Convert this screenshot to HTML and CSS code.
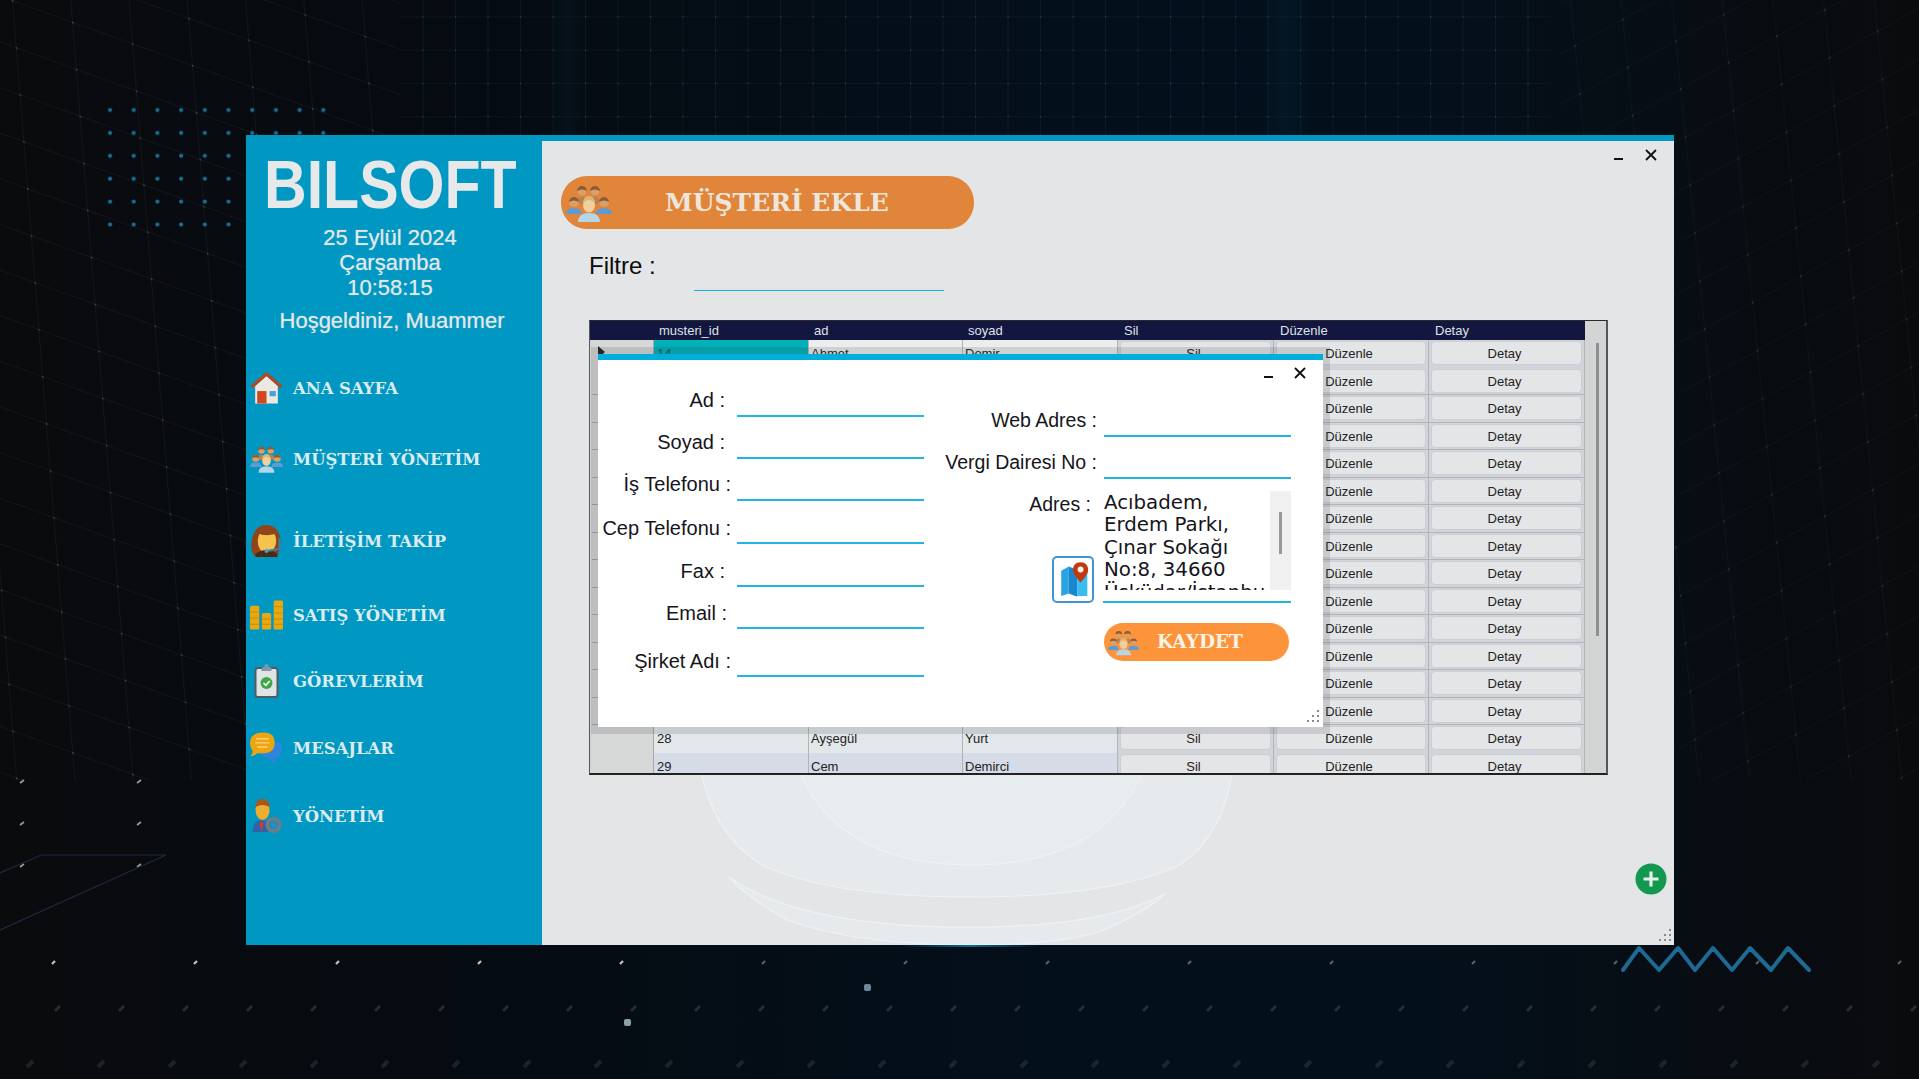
FILE: index.html
```html
<!DOCTYPE html>
<html lang="tr">
<head>
    <meta charset="UTF-8">
    <title>Bilsoft - Müşteri Ekle</title>
    <link rel="stylesheet" href="styles.css">
</head>
<body>

    <!-- ikonlar -->
    <svg class="sprite" width="0" height="0">
        <symbol id="i-people" viewBox="0 0 46 38">
            <circle cx="16" cy="7" r="4.5" fill="#d9a06a"/><path d="M11 7a5 5 0 0 1 10 0q-5-3-10 0z" fill="#8f5a36"/>
            <circle cx="29" cy="7" r="4.5" fill="#d9a06a"/><path d="M24 7a5 5 0 0 1 10 0q-5-3-10 0z" fill="#8f5a36"/>
            <path d="M11 20q0-7 5-7t5 7zM24 20q0-7 5-7t5 7z" fill="#b9824f"/>
            <circle cx="8" cy="18" r="5" fill="#d9a06a"/><path d="M3 18a5 5 0 0 1 10 0q-5-3-10 0z" fill="#8f5a36"/>
            <circle cx="38" cy="18" r="5" fill="#d9a06a"/><path d="M33 18a5 5 0 0 1 10 0q-5-3-10 0z" fill="#8f5a36"/>
            <path d="M0 30q0-6 8-6t8 6zM30 30q0-6 8-6t8 6z" fill="#5f9bd0"/>
            <ellipse cx="23" cy="21" rx="6" ry="7.5" fill="#f0cf9c"/><path d="M17 20q0-8 6-8t6 8q-2-4-6-4t-6 4z" fill="#dcb578"/>
            <path d="M12 38q0-9 11-9t11 9z" fill="#b5d6e8"/>
        </symbol>
        <symbol id="i-home" viewBox="0 0 32 32">
            <path d="M5 14 16 4l11 10v17H5z" fill="#ece8e2"/>
            <rect x="7" y="19" width="9" height="12" fill="#d2481c"/>
            <rect x="19" y="19" width="6" height="5" fill="#4a9ede"/>
            <path d="M1.500 15 16 2.500 30.500 15" fill="none" stroke="#b5471f" stroke-width="3"/>
        </symbol>
        <symbol id="i-agent" viewBox="0 0 32 34">
            <path d="M16 1c9 0 14 7 14 17 0 8-2 14-7 15H7C2 32 0 26 1 18 2 8 7 1 16 1z" fill="#8e451c"/>
            <path d="M9 10c6 2 11 1 15 0 3 6 2 14-4 18-3 2-6 2-8 0C7 24 6 16 9 10z" fill="#f5c24e"/>
            <path d="M5 30q5-4 11-4t11 4v3H5z" fill="#4d2a14"/>
            <path d="M29 14v12M29 25 16 27" fill="none" stroke="#3f7fa6" stroke-width="2"/>
            <circle cx="16" cy="27" r="2" fill="#3aa3dc"/>
        </symbol>
        <symbol id="i-bars" viewBox="0 0 32 28">
            <rect y="5" width="9" height="23" rx="1.500" fill="#e9a80f"/>
            <rect x="11.500" y="12" width="9" height="16" rx="1.500" fill="#e9a80f"/>
            <rect x="23" width="9" height="28" rx="1.500" fill="#e9a80f"/>
            <path d="M0 11h9M0 17h9M0 23h9M12 18h8M12 23h8M23 6h9M23 12h9M23 18h9M23 23h9" stroke="#c98c08" stroke-width="1"/>
        </symbol>
        <symbol id="i-task" viewBox="0 0 24 34">
            <rect x="1" y="4" width="22" height="29" rx="2.500" fill="#dfe4e6" stroke="#535a62" stroke-width="2"/>
            <path d="M7 5q0-2 3-2 0-3 2-3t2 3q3 0 3 2v2H7z" fill="#7f98a8"/>
            <circle cx="12" cy="19" r="6" fill="#3fa845"/>
            <path d="m9 19 2.300 2.300L15.200 17" fill="none" stroke="#fff" stroke-width="1.600"/>
        </symbol>
        <symbol id="i-chat" viewBox="0 0 32 32">
            <path d="M10 11h20q2 6-1 12-2 3-6 3 2 3 6 5-8 0-11-5-8-1-9-7z" fill="#2f84dd"/>
            <path d="M13 1h1q10 0 10 10t-10 10H7q-3 3-7 3 3-2 2.500-5Q0 16 0 11 0 1 13 1z" fill="#eea50e"/>
            <path d="M6 7h12M5 11h14M7 15h10" stroke="#f7d481" stroke-width="1.300"/>
        </symbol>
        <symbol id="i-admin" viewBox="0 0 28 34">
            <path d="M0 33q0-11 9-12 9 1 10 12z" fill="#2f63a8"/>
            <path d="M9 21l-2 4 2 8 2-8z" fill="#d8392b"/>
            <ellipse cx="10" cy="11" rx="7" ry="10" fill="#eead2f"/>
            <path d="M3 8Q3 0 10 0t7 8Q10 4 3 8z" fill="#a9561f"/>
            <circle cx="21" cy="26" r="6" fill="none" stroke="#6f7b86" stroke-width="4"/>
            <circle cx="21" cy="26" r="2.500" fill="#3c83c6"/>
        </symbol>
    </svg>

    <!-- arka plan -->
    <svg class="backdrop" viewBox="0 0 1919 1079" aria-hidden="true">
        <defs>
            <pattern id="p-top" width="32.500" height="33.300" patternUnits="userSpaceOnUse" y="-16">
                <path d="M.5 0v33.300M0 33h32.500" stroke="#7fb0c8" stroke-opacity=".06"/>
                <circle cx=".5" cy="33" r=".8" fill="#8aa" fill-opacity=".4"/>
            </pattern>
            <pattern id="p-left" width="60" height="47" patternUnits="userSpaceOnUse" patternTransform="matrix(1 .36 .08 1 12 0)">
                <path d="M.5 0v47M0 .5h60" stroke="#99a" stroke-opacity=".07"/>
                <circle cx=".5" cy=".5" r="1" fill="#99a" fill-opacity=".45"/>
            </pattern>
            <pattern id="p-right" width="48" height="48" patternUnits="userSpaceOnUse" patternTransform="matrix(1 -.55 .1 1 0 0)">
                <path d="M.5 0v48M0 .5h48" stroke="#999" stroke-opacity=".045"/>
                <circle cx=".5" cy=".5" r=".9" fill="#999" fill-opacity=".3"/>
            </pattern>
            <pattern id="p-dots" width="23.700" height="22.900" patternUnits="userSpaceOnUse" x="98" y="98.500">
                <circle cx="12" cy="11.500" r="2.100" fill="#1a6c96"/>
            </pattern>
            <pattern id="p-fleck1" width="142" height="30" patternUnits="userSpaceOnUse" x="-17" y="948">
                <path d="M69 16l3-3" stroke="#d9dcd8" stroke-width="2.200"/>
            </pattern>
            <pattern id="p-fleck2" width="64" height="30" patternUnits="userSpaceOnUse" y="993">
                <path d="M55 18l5-5" stroke="#8b9aa0" stroke-opacity=".22" stroke-width="3"/>
            </pattern>
            <pattern id="p-fleck3" width="71" height="30" patternUnits="userSpaceOnUse" x="-8" y="1048">
                <path d="M35 19l6-6" stroke="#8b9aa0" stroke-opacity=".16" stroke-width="4"/>
            </pattern>
            <pattern id="p-fleck4" width="117" height="42" patternUnits="userSpaceOnUse" y="756">
                <path d="M20 27l4-3" stroke="#d9dcd8" stroke-opacity=".7" stroke-width="1.600"/>
            </pattern>
            <linearGradient id="g-beam" x1="0" x2="1" y1="0" y2="0">
                <stop offset="0" stop-color="#0a5a80" stop-opacity="0"/>
                <stop offset=".5" stop-color="#0a5a80" stop-opacity=".09"/>
                <stop offset="1" stop-color="#0a5a80" stop-opacity="0"/>
            </linearGradient>
            <linearGradient id="g-glow" x1="0" x2="1" y1="0" y2="0">
                <stop offset="0" stop-color="#0c7fb0" stop-opacity="0"/>
                <stop offset=".5" stop-color="#0c7fb0" stop-opacity=".8"/>
                <stop offset="1" stop-color="#0c7fb0" stop-opacity="0"/>
            </linearGradient>
        </defs>
        <rect x="400" width="1150" height="135" fill="url(#p-top)"/>
        <rect width="246" height="780" fill="url(#p-left)"/>
        <rect x="246" width="154" height="135" fill="url(#p-left)"/>
        <rect x="1674" width="245" height="780" fill="url(#p-right)"/>
        <rect x="1560" width="114" height="135" fill="url(#p-right)"/>
        <rect x="550" width="34" height="135" fill="url(#g-beam)"/>
        <rect x="1260" width="50" height="135" fill="url(#g-beam)"/>
        <rect x="107" y="107" width="237" height="137" fill="url(#p-dots)"/>
        <rect y="770" width="246" height="120" fill="url(#p-fleck4)"/>
        <rect y="948" width="760" height="30" fill="url(#p-fleck1)" opacity=".9"/>
        <rect x="760" y="948" width="1159" height="30" fill="url(#p-fleck1)" opacity=".4"/>
        <rect y="993" width="1919" height="30" fill="url(#p-fleck2)"/>
        <rect y="1048" width="1919" height="30" fill="url(#p-fleck3)"/>
        <rect x="900" y="945" width="140" height="2" fill="url(#g-glow)"/>
        <path d="M0 873 41 855H166L0 930" fill="none" stroke="#1c2a40" stroke-width="1.200"/>
        <rect x="864" y="984" width="7" height="7" rx="2" fill="#6f8798"/>
        <rect x="624" y="1019" width="7" height="7" rx="2" fill="#8ea2a6"/>
        <polyline class="squiggle" points="1623,970 1639,948 1659,970 1678,948 1695,970 1713,948 1732,970 1750,948 1771,970 1788,948 1809,970"/>
    </svg>

    <div class="window">

        <!-- sol menü -->
        <div class="sidebar">
            <div class="logo">BILSOFT</div>
            <div class="clock">
                <div>25 Eylül 2024</div>
                <div>Çarşamba</div>
                <div>10:58:15</div>
            </div>
            <div class="welcome">Hoşgeldiniz, Muammer</div>
            <ul class="nav">
                <li><svg class="nav-icon"><use href="#i-home"/></svg><span>ANA SAYFA</span></li>
                <li><svg class="nav-icon"><use href="#i-people"/></svg><span>MÜŞTERİ YÖNETİM</span></li>
                <li><svg class="nav-icon"><use href="#i-agent"/></svg><span>İLETİŞİM TAKİP</span></li>
                <li><svg class="nav-icon"><use href="#i-bars"/></svg><span>SATIŞ YÖNETİM</span></li>
                <li><svg class="nav-icon"><use href="#i-task"/></svg><span>GÖREVLERİM</span></li>
                <li><svg class="nav-icon"><use href="#i-chat"/></svg><span>MESAJLAR</span></li>
                <li><svg class="nav-icon"><use href="#i-admin"/></svg><span>YÖNETİM</span></li>
            </ul>
        </div>

        <!-- içerik -->
        <div class="main">
            <svg class="hologram" viewBox="0 0 1132 810" aria-hidden="true">
                <g fill="#e9f2f5" fill-opacity=".4" stroke="#eaf3f6" stroke-width="1.200">
                    <path d="M154 560q-6 130 70 172 70 30 205 30t205-30q70-42 56-172z"/>
                    <path d="M187 742q20 22 58 43 70 25 183 25 80 0 126-12 50-20 70-40-60 34-196 34-170 0-241-50z"/>
                    <path d="M245 600q30 130 184 130t184-130z" fill-opacity=".35"/>
                </g>
            </svg>

            <div class="win-controls">
                <span class="win-min"></span>
                <svg class="win-close" viewBox="0 0 12 12"><path d="M1 1l10 10M11 1 1 11"/></svg>
            </div>

            <div class="title-pill">
                <svg class="title-icon"><use href="#i-people"/></svg>
                <span>MÜŞTERİ EKLE</span>
            </div>

            <div class="filter">
                <label>Filtre :</label>
                <div class="filter-input"></div>
            </div>

            <!-- tablo -->
            <div class="grid">
                <div class="grid-head">
                    <div></div><div>musteri_id</div><div>ad</div><div>soyad</div><div>Sil</div><div>Düzenle</div><div>Detay</div>
                </div>
                <div class="grid-body">
                    <div class="row selected">
                        <div class="rowhead"><span class="row-arrow"></span></div><div class="cell id">14</div><div class="cell">Ahmet</div><div class="cell">Demir</div><div class="cell"><span class="btn">Sil</span></div><div class="cell"><span class="btn">Düzenle</span></div><div class="cell"><span class="btn">Detay</span></div>
                    </div>
                    <div class="row alt"><div class="rowhead"></div><div class="cell"></div><div class="cell"></div><div class="cell"></div><div class="cell"></div><div class="cell"><span class="btn">Düzenle</span></div><div class="cell"><span class="btn">Detay</span></div></div>
                    <div class="row"><div class="rowhead"></div><div class="cell"></div><div class="cell"></div><div class="cell"></div><div class="cell"></div><div class="cell"><span class="btn">Düzenle</span></div><div class="cell"><span class="btn">Detay</span></div></div>
                    <div class="row alt"><div class="rowhead"></div><div class="cell"></div><div class="cell"></div><div class="cell"></div><div class="cell"></div><div class="cell"><span class="btn">Düzenle</span></div><div class="cell"><span class="btn">Detay</span></div></div>
                    <div class="row"><div class="rowhead"></div><div class="cell"></div><div class="cell"></div><div class="cell"></div><div class="cell"></div><div class="cell"><span class="btn">Düzenle</span></div><div class="cell"><span class="btn">Detay</span></div></div>
                    <div class="row alt"><div class="rowhead"></div><div class="cell"></div><div class="cell"></div><div class="cell"></div><div class="cell"></div><div class="cell"><span class="btn">Düzenle</span></div><div class="cell"><span class="btn">Detay</span></div></div>
                    <div class="row"><div class="rowhead"></div><div class="cell"></div><div class="cell"></div><div class="cell"></div><div class="cell"></div><div class="cell"><span class="btn">Düzenle</span></div><div class="cell"><span class="btn">Detay</span></div></div>
                    <div class="row alt"><div class="rowhead"></div><div class="cell"></div><div class="cell"></div><div class="cell"></div><div class="cell"></div><div class="cell"><span class="btn">Düzenle</span></div><div class="cell"><span class="btn">Detay</span></div></div>
                    <div class="row"><div class="rowhead"></div><div class="cell"></div><div class="cell"></div><div class="cell"></div><div class="cell"></div><div class="cell"><span class="btn">Düzenle</span></div><div class="cell"><span class="btn">Detay</span></div></div>
                    <div class="row alt"><div class="rowhead"></div><div class="cell"></div><div class="cell"></div><div class="cell"></div><div class="cell"></div><div class="cell"><span class="btn">Düzenle</span></div><div class="cell"><span class="btn">Detay</span></div></div>
                    <div class="row"><div class="rowhead"></div><div class="cell"></div><div class="cell"></div><div class="cell"></div><div class="cell"></div><div class="cell"><span class="btn">Düzenle</span></div><div class="cell"><span class="btn">Detay</span></div></div>
                    <div class="row alt"><div class="rowhead"></div><div class="cell"></div><div class="cell"></div><div class="cell"></div><div class="cell"></div><div class="cell"><span class="btn">Düzenle</span></div><div class="cell"><span class="btn">Detay</span></div></div>
                    <div class="row"><div class="rowhead"></div><div class="cell"></div><div class="cell"></div><div class="cell"></div><div class="cell"></div><div class="cell"><span class="btn">Düzenle</span></div><div class="cell"><span class="btn">Detay</span></div></div>
                    <div class="row alt"><div class="rowhead"></div><div class="cell"></div><div class="cell"></div><div class="cell"></div><div class="cell"></div><div class="cell"><span class="btn">Düzenle</span></div><div class="cell"><span class="btn">Detay</span></div></div>
                    <div class="row">
                        <div class="rowhead"></div><div class="cell id">28</div><div class="cell">Ayşegül</div><div class="cell">Yurt</div><div class="cell"><span class="btn">Sil</span></div><div class="cell"><span class="btn">Düzenle</span></div><div class="cell"><span class="btn">Detay</span></div>
                    </div>
                    <div class="row alt">
                        <div class="rowhead"></div><div class="cell id">29</div><div class="cell">Cem</div><div class="cell">Demirci</div><div class="cell"><span class="btn">Sil</span></div><div class="cell"><span class="btn">Düzenle</span></div><div class="cell"><span class="btn">Detay</span></div>
                    </div>
                </div>
                <div class="grid-scroll"><div class="grid-thumb"></div></div>
            </div>

            <!-- ekleme penceresi -->
            <div class="dialog">
                <div class="dialog-controls">
                    <span class="win-min"></span>
                    <svg class="win-close" viewBox="0 0 12 12"><path d="M1 1l10 10M11 1 1 11"/></svg>
                </div>
                <div class="form-col form-left">
                    <div class="field"><label class="lbl-far">Ad :</label><div class="input"></div></div>
                    <div class="field"><label class="lbl-far">Soyad :</label><div class="input"></div></div>
                    <div class="field"><label class="lbl-near">İş Telefonu :</label><div class="input"></div></div>
                    <div class="field step"><label class="lbl-near">Cep Telefonu :</label><div class="input"></div></div>
                    <div class="field step"><label class="lbl-far">Fax :</label><div class="input"></div></div>
                    <div class="field low"><label class="lbl-mid">Email :</label><div class="input"></div></div>
                    <div class="field far"><label class="lbl-near">Şirket Adı :</label><div class="input"></div></div>
                </div>
                <div class="form-col form-right">
                    <div class="field"><label class="lbl-near">Web Adres :</label><div class="input"></div></div>
                    <div class="field"><label class="lbl-near">Vergi Dairesi No :</label><div class="input"></div></div>
                    <div class="field-address">
                        <div class="address-side">
                            <label>Adres :</label>
                            <div class="map-btn">
                                <svg viewBox="0 0 38 42" width="38" height="42">
                                    <path d="M5 10l9-5v32l-9 3z" fill="#2aa4e2"/>
                                    <path d="M14 5l10 4v32l-10-4z" fill="#1a86cf"/>
                                    <path d="M24 9l12 1v30H24z" fill="#38bdf2"/>
                                    <path d="M28 0c-6 0-9 4-9 9 0 5 5 10 9 15 4-5 9-10 9-15 0-5-3-9-9-9z" fill="#c03a10"/>
                                    <circle cx="28" cy="8.500" r="3.500" fill="#f4f1ec"/>
                                </svg>
                            </div>
                        </div>
                        <div class="address-box">
                            <div class="address-text">Acıbadem,<br>Erdem Parkı,<br>Çınar Sokağı<br>No:8, 34660<br>Üsküdar/İstanbul</div>
                            <div class="address-scroll"><div class="address-thumb"></div></div>
                        </div>
                    </div>
                    <div class="save-btn">
                        <svg class="save-icon"><use href="#i-people"/></svg>
                        <span>KAYDET</span>
                    </div>
                </div>
                <svg class="grip" viewBox="0 0 14 14"><path d="M12 1h2v2h-2zM7 6h2v2H7zM12 6h2v2h-2zM2 11h2v2H2zM7 11h2v2H7zM12 11h2v2h-2z"/></svg>
            </div>

            <svg class="add-btn" viewBox="0 0 32 32">
                <circle cx="16" cy="16" r="15.500" fill="#12994f"/>
                <path d="M16 8.500v15M8.500 16h15" stroke="#e8efe9" stroke-width="3.200"/>
            </svg>
            <svg class="grip main-grip" viewBox="0 0 14 14"><path d="M12 1h2v2h-2zM7 6h2v2H7zM12 6h2v2h-2zM2 11h2v2H2zM7 11h2v2H7zM12 11h2v2h-2z"/></svg>
        </div>
    </div>

</body>
</html>
```

FILE: styles.css
```css
html, body {
    margin: 0;
    height: 100%;
}

body {
    position: relative;
    overflow: hidden;
    font-family: "Liberation Sans", Arial, sans-serif;
    background: linear-gradient(90deg, #0a0b0d 0%, #050b12 25%, #03101c 60%, #03101c 72%, #0a0b0d 100%);
}

.sprite {
    position: absolute;
}

.backdrop {
    position: absolute;
    left: 0;
    top: 0;
    width: 1919px;
    height: 1079px;
}

.squiggle {
    fill: none;
    stroke: #1e6a94;
    stroke-width: 4;
    stroke-linecap: round;
    stroke-linejoin: round;
}

/* ana pencere */
.window {
    position: absolute;
    left: 246px;
    top: 135px;
    width: 1428px;
    height: 810px;
    display: flex;
}

.sidebar {
    width: 296px;
    box-sizing: border-box;
    background-color: #0098c2;
    color: #e4e8ea;
    padding-top: 25px;
}

.logo {
    width: 253px;
    height: 50px;
    margin-left: 18px;
    font-size: 69px;
    line-height: 50px;
    font-weight: bold;
    color: #e6e8ea;
    white-space: nowrap;
    transform: scaleX(.856);
    transform-origin: left center;
}

.clock {
    width: 288px;
    margin-top: 15px;
    text-align: center;
    font-size: 22px;
    line-height: 25px;
    text-shadow: 0 0 1px rgba(230, 235, 238, .6);
}

.welcome {
    width: 292px;
    margin-top: 8px;
    text-align: center;
    font-size: 22px;
    line-height: 26px;
    text-shadow: 0 0 1px rgba(230, 235, 238, .6);
}

.nav {
    list-style-type: none;
    margin: 37px 0 0;
    padding: 0 0 0 4px;
}

.nav li {
    display: flex;
    align-items: center;
    height: 34px;
    font-family: "DejaVu Serif", "Liberation Serif", serif;
    font-size: 16.400px;
    font-weight: bold;
    color: #dcebf0;
}

.nav li:nth-child(2) { margin-top: 37px; }
.nav li:nth-child(3) { margin-top: 48px; }
.nav li:nth-child(4) { margin-top: 40px; }
.nav li:nth-child(5) { margin-top: 32px; }
.nav li:nth-child(6) { margin-top: 33px; }
.nav li:nth-child(7) { margin-top: 34px; }

.nav-icon {
    width: 33px;
    height: 34px;
    flex: none;
    margin-right: 10px;
}

/* sağ içerik */
.main {
    flex: 1;
    position: relative;
    box-sizing: border-box;
    border-top: 6px solid #0098c2;
    background-color: #e4e5e7;
    padding: 35px 0 0 19px;
}

.hologram {
    position: absolute;
    left: 0;
    top: -6px;
    width: 1132px;
    height: 810px;
}

.win-controls {
    position: absolute;
    right: 17px;
    top: 8px;
    display: flex;
    align-items: flex-end;
    gap: 22px;
}

.win-min {
    display: block;
    width: 9px;
    height: 2px;
    background-color: #111;
    margin-bottom: 1px;
}

.win-close {
    display: block;
    width: 12px;
    height: 12px;
    fill: none;
    stroke: #111;
    stroke-width: 1.800;
}

.title-pill {
    position: relative;
    display: flex;
    align-items: center;
    width: 413px;
    height: 53px;
    border-radius: 26px;
    background-color: #e0853a;
    color: #eee6dc;
    font-family: "DejaVu Serif", "Liberation Serif", serif;
    font-size: 25px;
    font-weight: bold;
}

.title-icon {
    width: 46px;
    height: 38px;
    margin-left: 5px;
    margin-right: 53px;
}

.filter {
    position: relative;
    display: flex;
    margin: 17px 0 0 28px;
    height: 45px;
    font-size: 24px;
}

.filter label {
    width: 105px;
    line-height: 40px;
    color: #0b0b0b;
}

.filter-input {
    width: 250px;
    height: 44px;
    border-bottom: 1.500px solid #18aede;
}

/* tablo */
.grid {
    position: relative;
    width: 1019px;
    height: 455px;
    margin: 29px 0 0 28px;
    box-sizing: border-box;
    border: 1px solid #2a2a2e;
    border-width: 1px 2px 2px 1px;
    border-color: #2a2a2e #55585a #222 #55585a;
    overflow: hidden;
    background-color: #d3d5d5;
    font-size: 13px;
    color: #222;
}

.grid-head {
    display: grid;
    grid-template-columns: 64px 155px 154px 155px 156px 155px 156px;
    width: 995px;
    height: 19px;
    background-color: #13163f;
    color: #dfe3ea;
    line-height: 19px;
}

.grid-head div {
    padding-left: 5px;
}

.grid-head div:nth-child(n+5) {
    padding-left: 6px;
}

.row {
    display: grid;
    grid-template-columns: 64px 155px 154px 155px 156px 155px 156px;
    width: 995px;
    height: 27.500px;
    line-height: 28px;
}

.cell {
    box-sizing: border-box;
    border-right: 1px solid #b2b4b8;
    border-bottom: 1px solid #b2b4b8;
    padding-left: 2px;
    background-color: #e2e7e9;
}

.alt .cell {
    background-color: #d6dbe8;
}

.cell:has(.btn) {
    padding: 1px 2px;
    background-color: #d2d4dc;
}

.cell.id {
    padding-left: 3px;
}

.selected .cell.id {
    background-color: #00b0b8;
    color: #0f5a60;
}

.selected .cell:nth-child(3), .selected .cell:nth-child(4) {
    background-color: #eceded;
}

.btn {
    display: block;
    box-sizing: border-box;
    height: 24px;
    line-height: 24px;
    text-align: center;
    padding-right: 4px;
    background-color: #e4e5e7;
    border: 1px solid #cdced2;
    border-radius: 4px;
}

.rowhead {
    position: relative;
    box-sizing: border-box;
    border-right: 1px solid #a8aaae;
    background-color: #d6d7d7;
    border-bottom: 1px solid #a4a6a8;
    margin-left: 2px;
}

.row-arrow {
    position: absolute;
    left: 6px;
    top: 6px;
    border-left: 7px solid #222;
    border-top: 6px solid transparent;
    border-bottom: 6px solid transparent;
}

.grid-scroll {
    position: absolute;
    right: 0;
    top: 0;
    width: 21px;
    height: 100%;
}

.grid-thumb {
    position: absolute;
    left: 11px;
    top: 22px;
    width: 3px;
    height: 293px;
    background-color: #8e9093;
}

/* ekleme penceresi */
.dialog {
    position: absolute;
    left: 56px;
    top: 213px;
    width: 725px;
    height: 373px;
    box-sizing: border-box;
    display: flex;
    border-top: 6px solid #00aedb;
    background-color: #fff;
    box-shadow: 0 0 0 7px rgba(60, 62, 66, .16);
    color: #15151c;
    font-size: 20px;
}

.dialog-controls {
    position: absolute;
    right: 17px;
    top: 7px;
    display: flex;
    align-items: flex-end;
    gap: 21px;
}

.form-col {
    display: flex;
    flex-direction: column;
    box-sizing: border-box;
}

.form-left {
    width: 326px;
    padding-top: 25px;
    gap: 10px;
}

.form-right {
    width: 367px;
    padding-top: 45px;
    gap: 10px;
    font-size: 19.500px;
}

.field {
    display: flex;
    height: 32px;
    flex: none;
}

.field.step {
    margin-top: 1px;
}

.field.far {
    margin-top: 6px;
}

.field label {
    flex: 1;
    text-align: right;
    line-height: 31px;
    white-space: nowrap;
}

.field.step label, .field.low label, .field.far label {
    line-height: 33px;
}

.lbl-far { margin-right: 12px; }
.lbl-mid { margin-right: 10px; }
.lbl-near { margin-right: 6px; }

.form-right .lbl-near { margin-right: 7px; }

.input {
    width: 187px;
    flex: none;
    box-sizing: border-box;
    border-bottom: 2px solid #1fb6e3;
}

.field-address {
    display: flex;
    height: 112px;
    flex: none;
    margin-top: 2px;
}

.address-side {
    flex: 1;
    display: flex;
    flex-direction: column;
    align-items: flex-end;
    justify-content: space-between;
    padding-right: 9px;
}

.address-side label {
    margin: -3px 3px 0 0;
    line-height: 32px;
}

.map-btn {
    width: 42px;
    height: 47px;
    box-sizing: border-box;
    display: flex;
    align-items: center;
    justify-content: center;
    border: 2px solid #3f94d8;
    border-radius: 5px;
    background-color: #fff;
}

.map-btn svg {
    width: 32px;
    height: 38px;
}

.address-box {
    width: 188px;
    height: 112px;
    flex: none;
    box-sizing: border-box;
    border-bottom: 2px solid #1fb6e3;
    position: relative;
}

.address-text {
    height: 98.500px;
    width: 160px;
    margin-left: 1px;
    padding-top: .5px;
    overflow: hidden;
    white-space: nowrap;
    font-family: "DejaVu Sans", sans-serif;
    font-size: 19.800px;
    line-height: 22.500px;
}

.address-scroll {
    position: absolute;
    right: 0;
    top: 0;
    width: 21px;
    height: 99px;
    background-color: #f0f0f0;
}

.address-thumb {
    position: absolute;
    left: 9px;
    top: 21px;
    width: 3px;
    height: 42px;
    background-color: #999;
}

.save-btn {
    display: flex;
    align-items: center;
    align-self: flex-end;
    width: 185px;
    height: 38px;
    margin: 10px 2px 0 0;
    border-radius: 19px;
    background-color: #fd933a;
    color: #fff3e6;
    font-family: "DejaVu Serif", "Liberation Serif", serif;
    font-size: 18.500px;
    font-weight: bold;
    line-height: 36px;
}

.save-icon {
    width: 31px;
    height: 27px;
    margin-left: 4px;
    margin-right: 18px;
}

.grip {
    position: absolute;
    right: 4px;
    bottom: 4px;
    width: 14px;
    height: 14px;
    fill: #8a8a8a;
}

.main-grip {
    right: 3px;
    bottom: 3px;
}

.add-btn {
    position: absolute;
    right: 7px;
    top: 722px;
    width: 32px;
    height: 32px;
}
```
